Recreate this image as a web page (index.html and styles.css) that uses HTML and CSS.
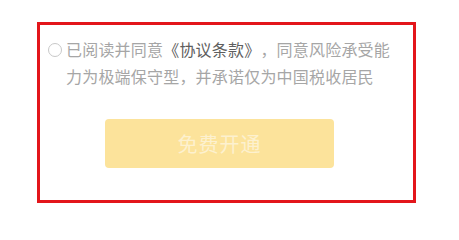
FILE: index.html
```html
<!DOCTYPE html>
<html lang="zh">
<head>
<meta charset="utf-8">
<link rel="stylesheet" href="styles.css">
</head>
<body>
<div class="frame">
  <div class="agree">
    <span class="radio"></span>
    <p class="agree-text">已阅读并同意<span class="link">《协议条款》</span>，同意风险承受能力为极端保守型，并承诺仅为中国税收居民</p>
  </div>
  <button class="submit">免费开通</button>
</div>
</body>
</html>
```
FILE: styles.css
```css
html, body {
  margin: 0;
  padding: 0;
  background: #ffffff;
}
body {
  font-family: "Noto Sans CJK SC", "Noto Sans", sans-serif;
  padding: 22px 0 0 37px;
}
.frame {
  box-sizing: border-box;
  width: 379px;
  height: 181px;
  border: 3px solid #e3161b;
  padding: 11px 8px 0 8px;
}
.agree {
  display: flex;
  align-items: flex-start;
  gap: 4px;
}
.radio {
  flex: none;
  box-sizing: border-box;
  width: 14px;
  height: 14px;
  margin-top: 7px;
  border: 1px solid #c8c8c8;
  border-radius: 50%;
}
.agree-text {
  margin: 0;
  font-size: 16px;
  letter-spacing: 0.2px;
  line-height: 27px;
  color: #a6a6a6;
  width: 335px;
  text-spacing-trim: space-all;
}
.link {
  color: #5e5e5e;
}
.submit {
  display: block;
  margin: 29px 0 0 57px;
  width: 229px;
  height: 49px;
  border: none;
  border-radius: 4px;
  background: #fce39b;
  color: #fdf1cf;
  font-family: "Noto Sans CJK SC", "Noto Sans", sans-serif;
  font-size: 20px;
  letter-spacing: 1px;
  padding: 0;
}
```
